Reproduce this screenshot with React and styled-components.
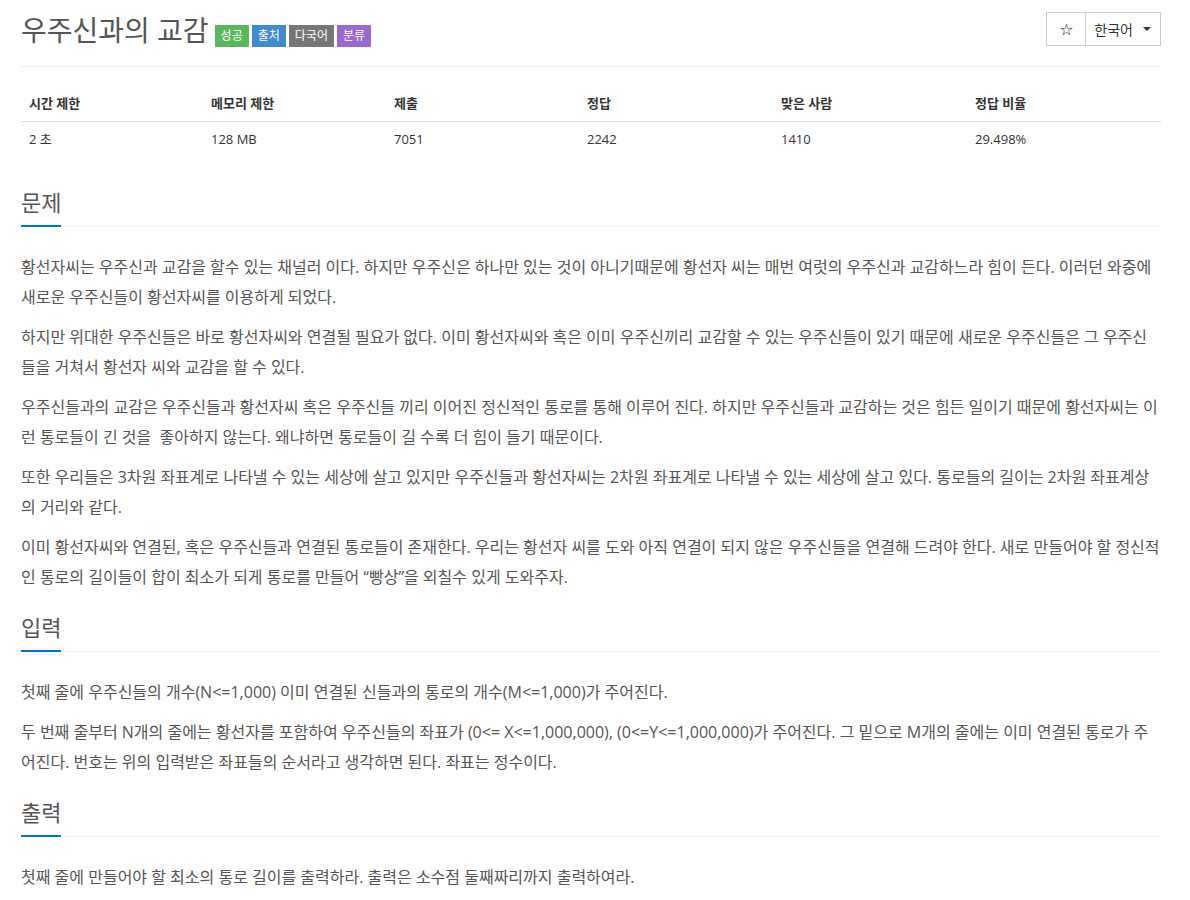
import React from 'react';
import styled, { createGlobalStyle } from 'styled-components';

const GlobalStyle = createGlobalStyle`
  body {
    margin: 0;
    background: #fff;
    font-family: "Open Sans", "Noto Sans CJK KR", sans-serif;
    color: #555;
  }
`;

const stats = [
  { head: '시간 제한', value: '2 초', width: 182 },
  { head: '메모리 제한', value: '128 MB', width: 183 },
  { head: '제출', value: '7051', width: 193 },
  { head: '정답', value: '2242', width: 194 },
  { head: '맞은 사람', value: '1410', width: 194 },
  { head: '정답 비율', value: '29.498%', width: 194 },
];

const labels = [
  { text: '성공', color: '#5cb85c' },
  { text: '출처', color: '#428bca' },
  { text: '다국어', color: '#777777' },
  { text: '분류', color: '#9b69cd' },
];

export default function App() {
  return (
    <>
      <GlobalStyle />
      <Container>
        <PageHeader>
          <Title>
            우주신과의 교감
            <Labels>
              {labels.map((l) => (
                <Label key={l.text} $bg={l.color}>
                  {l.text}
                </Label>
              ))}
            </Labels>
          </Title>
          <LangGroup>
            <StarButton>☆</StarButton>
            <LangSelect>
              한국어
              <Caret />
            </LangSelect>
          </LangGroup>
        </PageHeader>

        <InfoTable>
          <colgroup>
            {stats.map((s) => (
              <col key={s.head} style={{ width: s.width }} />
            ))}
          </colgroup>
          <thead>
            <tr>
              {stats.map((s) => (
                <Th key={s.head}>{s.head}</Th>
              ))}
            </tr>
          </thead>
          <tbody>
            <tr>
              {stats.map((s) => (
                <Td key={s.head}>{s.value}</Td>
              ))}
            </tr>
          </tbody>
        </InfoTable>

        <Section>
          <Headline>
            <H2>문제</H2>
          </Headline>
          <Text>
            <P>
              황선자씨는 우주신과 교감을 할수 있는 채널러 이다. 하지만 우주신은 하나만 있는 것이 아니기때문에 황선자 씨는 매번 여럿의 우주신과 교감하느라 힘이 든다. 이러던 와중에 새로운 우주신들이 황선자씨를 이용하게 되었다.
            </P>
            <P>
              하지만 위대한 우주신들은 바로 황선자씨와 연결될 필요가 없다. 이미 황선자씨와 혹은 이미 우주신끼리 교감할 수 있는 우주신들이 있기 때문에 새로운 우주신들은 그 우주신들을 거쳐서 황선자 씨와 교감을 할 수 있다.
            </P>
            <P>
              우주신들과의 교감은 우주신들과 황선자씨 혹은 우주신들 끼리 이어진 정신적인 통로를 통해 이루어 진다. 하지만 우주신들과 교감하는 것은 힘든 일이기 때문에 황선자씨는 이런 통로들이 긴 것을 {'\u00a0'}좋아하지 않는다. 왜냐하면 통로들이 길 수록 더 힘이 들기 때문이다.
            </P>
            <P>
              또한 우리들은 3차원 좌표계로 나타낼 수 있는 세상에 살고 있지만 우주신들과 황선자씨는 2차원 좌표계로 나타낼 수 있는 세상에 살고 있다. 통로들의 길이는 2차원 좌표계상의 거리와 같다.
            </P>
            <P>
              이미 황선자씨와 연결된, 혹은 우주신들과 연결된 통로들이 존재한다. 우리는 황선자 씨를 도와 아직 연결이 되지 않은 우주신들을 연결해 드려야 한다. 새로 만들어야 할 정신적인 통로의 길이들이 합이 최소가 되게 통로를 만들어 “빵상”을 외칠수 있게 도와주자.
            </P>
          </Text>
        </Section>

        <Section>
          <Headline>
            <H2>입력</H2>
          </Headline>
          <Text>
            <P>첫째 줄에 우주신들의 개수(N&lt;=1,000) 이미 연결된 신들과의 통로의 개수(M&lt;=1,000)가 주어진다.</P>
            <P>
              두 번째 줄부터 N개의 줄에는 황선자를 포함하여 우주신들의 좌표가 (0&lt;= X&lt;=1,000,000), (0&lt;=Y&lt;=1,000,000)가 주어진다. 그 밑으로 M개의 줄에는 이미 연결된 통로가 주어진다. 번호는 위의 입력받은 좌표들의 순서라고 생각하면 된다. 좌표는 정수이다.
            </P>
          </Text>
        </Section>

        <Section>
          <Headline>
            <H2>출력</H2>
          </Headline>
          <Text>
            <P>첫째 줄에 만들어야 할 최소의 통로 길이를 출력하라. 출력은 소수점 둘째짜리까지 출력하여라.</P>
          </Text>
        </Section>
      </Container>
    </>
  );
}

const Container = styled.div`
  width: 1140px;
  padding: 0 29px 0 21px;
`;

const PageHeader = styled.div`
  display: flex;
  justify-content: space-between;
  align-items: flex-start;
  padding-top: 12px;
  padding-bottom: 18px;
  border-bottom: 1px solid #eee;
`;

const Title = styled.h1`
  margin: 0;
  display: flex;
  align-items: flex-end;
  font-size: 28px;
  font-weight: 400;
  line-height: 36px;
  color: #555;
`;

const Labels = styled.span`
  display: flex;
  gap: 3px;
  margin-left: 6px;
  margin-bottom: 1px;
`;

const Label = styled.span`
  display: inline-flex;
  align-items: center;
  height: 22px;
  padding: 0 6px;
  font-size: 12px;
  line-height: 1;
  color: #fff;
  background: ${(p) => p.$bg};
`;

const LangGroup = styled.div`
  display: flex;
  height: 34px;
  border: 1px solid #ccc;
  box-sizing: border-box;
`;

const StarButton = styled.div`
  width: 38px;
  display: flex;
  align-items: center;
  justify-content: center;
  font-size: 16px;
  color: #222;
  border-right: 1px solid #ccc;
  font-family: "DejaVu Sans", sans-serif;
`;

const LangSelect = styled.div`
  display: flex;
  align-items: center;
  padding: 0 9px 0 8px;
  font-size: 14px;
  color: #333;
`;

const Caret = styled.span`
  margin-left: 10px;
  width: 0;
  height: 0;
  border-left: 4px solid transparent;
  border-right: 4px solid transparent;
  border-top: 4px solid #333;
`;

const InfoTable = styled.table`
  width: 100%;
  margin-top: 19px;
  border-collapse: collapse;
  table-layout: fixed;
  font-size: 13px;
  color: #333;
`;

const Th = styled.th`
  text-align: left;
  font-weight: 700;
  padding: 8px;
  line-height: 19px;
  border-bottom: 1px solid #ddd;
`;

const Td = styled.td`
  padding: 8px;
  line-height: 19px;
`;

const Section = styled.section`
  margin-top: 22px;
  &:first-of-type {
    margin-top: 32px;
  }
`;

const Headline = styled.div`
  border-bottom: 1px dotted #e4e4e4;
  margin-bottom: 25px;
`;

const H2 = styled.h2`
  display: inline-block;
  margin: 0 0 -1px;
  padding-bottom: 10px;
  font-size: 22px;
  font-weight: 400;
  line-height: 26px;
  color: #555;
  border-bottom: 2px solid #0076c0;
`;

const Text = styled.div`
  font-size: 16px;
  line-height: 30px;
  color: #555;
`;

const P = styled.p`
  margin: 0 0 10px;
`;
